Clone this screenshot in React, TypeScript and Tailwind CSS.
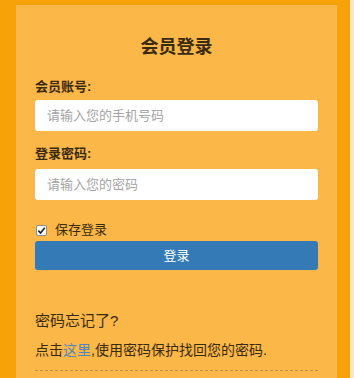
export default function App() {
  return (
    <div
      className="flex w-[354px] h-[378px] overflow-hidden bg-[#f8a20a] pl-4 pt-[5px] border-r-4 border-[#fde7c2]"
      style={{ fontFamily: '"Liberation Sans", "Noto Sans CJK SC", sans-serif' }}
    >
      <div className="w-[321px] shrink-0 bg-[#fbb747] px-[19px] pt-[30px] text-[#3a2a12]">
        <h1 className="text-center text-[18px] leading-6 font-bold">会员登录</h1>

        <label className="block mt-[19px] text-[13px] leading-[17px] font-bold">会员账号:</label>
        <input
          className="block mt-[5px] w-full h-[31px] rounded-[3px] bg-white px-3 text-[13px] outline-none placeholder:text-[#a5a5a5]"
          placeholder="请输入您的手机号码"
        />

        <label className="block mt-[14px] text-[13px] leading-[17px] font-bold">登录密码:</label>
        <input
          type="password"
          className="block mt-[7px] w-full h-[31px] rounded-[3px] bg-white px-3 text-[13px] outline-none placeholder:text-[#a5a5a5]"
          placeholder="请输入您的密码"
        />

        <div className="flex items-center mt-[21px] h-[18px]">
          <span className="ml-[1px] flex items-center justify-center w-[11px] h-[11px] rounded-[2px] bg-white border border-[#8a8a8a]">
            <svg viewBox="0 0 10 10" className="w-[9px] h-[9px]">
              <path d="M1.5 5.2 L4 7.8 L8.6 2" fill="none" stroke="#222" strokeWidth="1.8" />
            </svg>
          </span>
          <span className="ml-[8px] text-[13px] leading-[18px]">保存登录</span>
        </div>

        <button className="block mt-[2px] w-full h-[29px] rounded-[3px] bg-[#337ab7] text-white text-[13px]">
          登录
        </button>

        <p className="mt-[41px] text-[15px] leading-5">密码忘记了?</p>
        <p className="mt-[10px] text-[14px] leading-[19px]">
          点击<span className="text-[#4f87bd]">这里</span>,使用密码保护找回您的密码.
        </p>
        <div className="mt-[10px] border-t border-dashed border-[#b8914f]" />
      </div>
    </div>
  );
}
